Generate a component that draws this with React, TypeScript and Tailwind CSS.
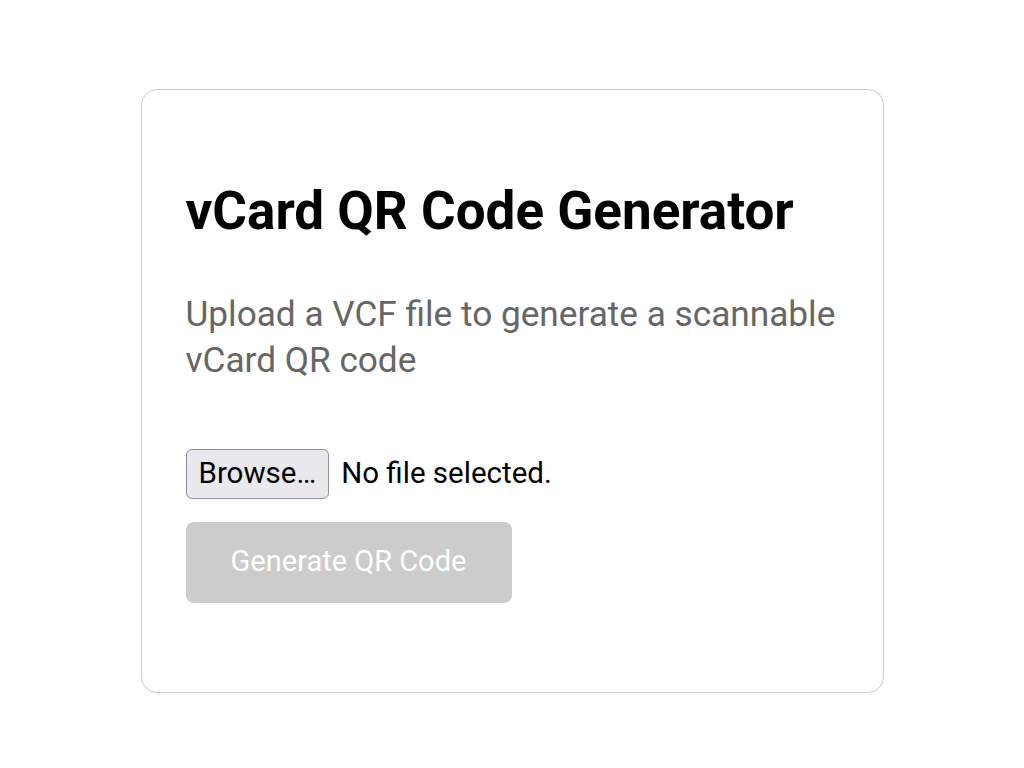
export default function App() {
  return (
    <div className="min-h-screen bg-white pt-[89px] font-['Roboto',sans-serif]">
      <div className="mx-auto w-[743px] h-[604px] rounded-2xl border border-[#cccccc] bg-white px-[44px] pt-[90px]">
        <h1 className="text-[53px] leading-[1.2] font-bold text-black">vCard QR Code Generator</h1>
        <p className="mt-[47px] text-[35.2px] leading-[46px] text-[#666666]">
          Upload a VCF file to generate a scannable vCard QR code
        </p>
        <div className="mt-[66px] flex items-center gap-[12px]">
          <span className="flex h-[50px] items-center rounded-[6px] border border-[#8f8f9d] bg-[#e9e9ed] px-[12px] text-[29.5px] text-black">
            Browse…
          </span>
          <span className="text-[29.5px] text-black">No file selected.</span>
        </div>
        <button
          disabled
          className="mt-[23px] flex h-[81px] w-[326px] items-center justify-center rounded-[8px] bg-[#cccccc] text-[29px] text-white"
        >
          Generate QR Code
        </button>
      </div>
    </div>
  );
}
